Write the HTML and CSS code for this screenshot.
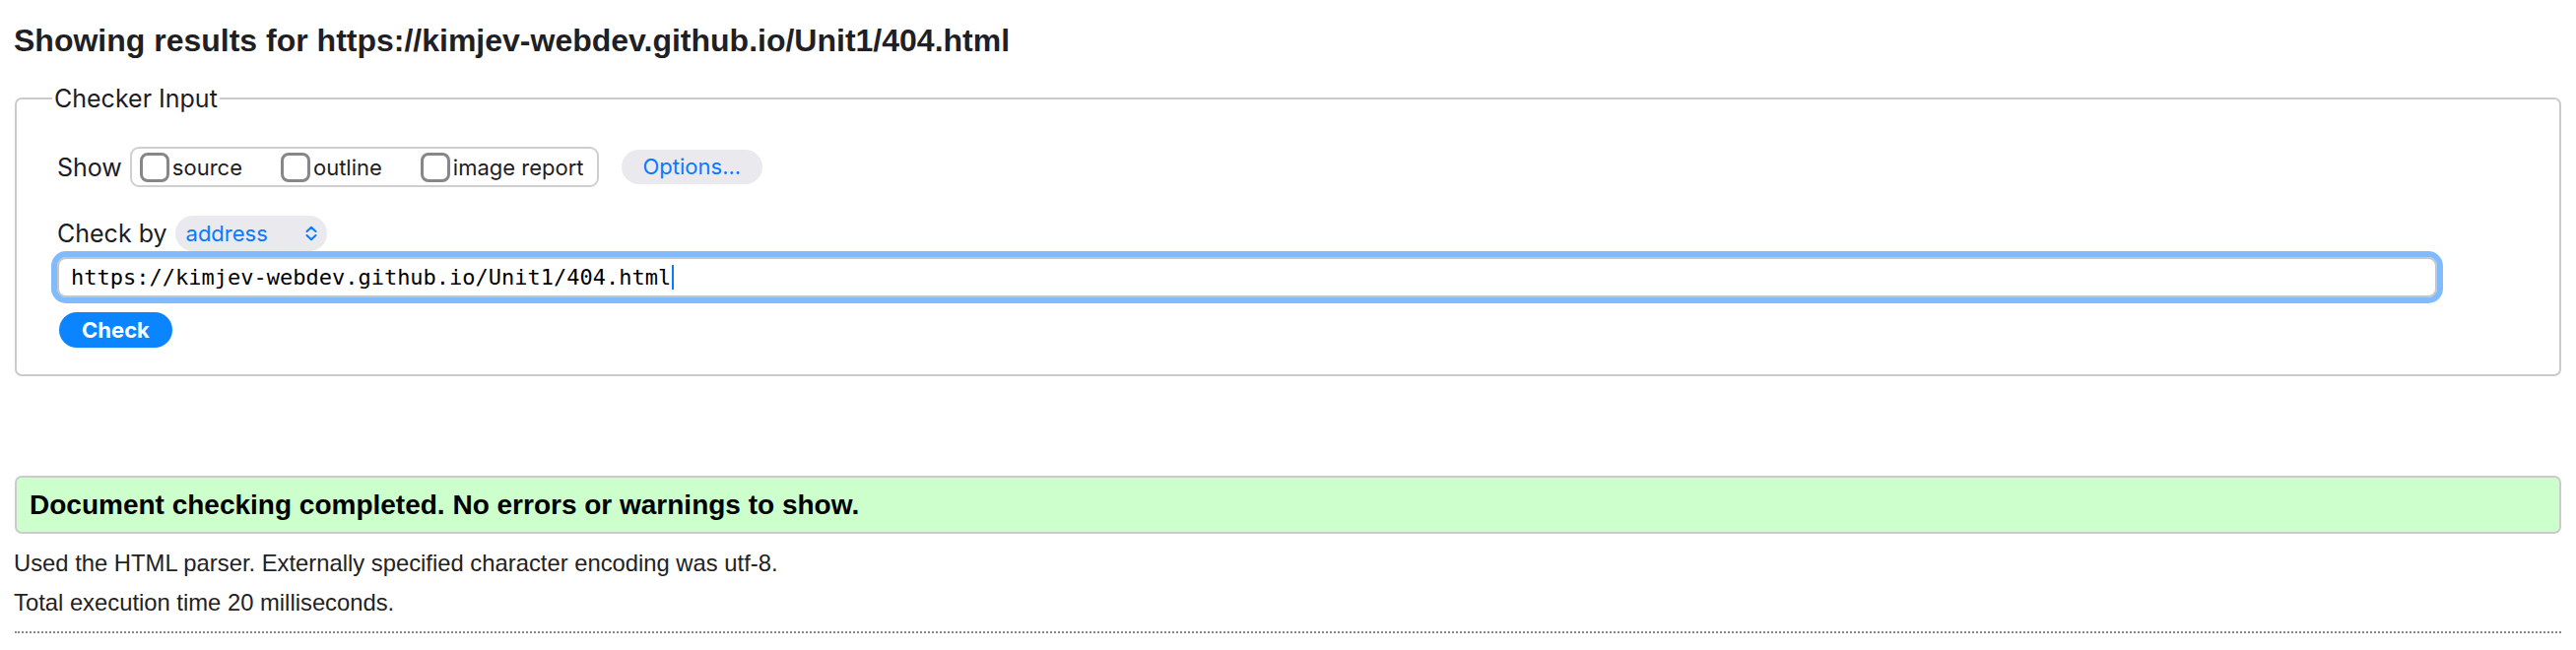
FILE: index.html
```html
<!DOCTYPE html>
<html lang="en">
<head>
<meta charset="utf-8">
<title>Showing results for https://kimjev-webdev.github.io/Unit1/404.html</title>
<link rel="stylesheet" href="styles.css">
</head>
<body>
<h2 class="page-title">Showing results for https://kimjev-webdev.github.io/Unit1/404.html</h2>
<fieldset class="checker">
  <legend class="checker-legend">Checker Input</legend>
  <div class="row show-row">
    <span class="row-label">Show</span>
    <div class="check-group">
      <label class="check-item"><span class="checkbox"></span><span class="check-text">source</span></label>
      <label class="check-item"><span class="checkbox"></span><span class="check-text">outline</span></label>
      <label class="check-item last"><span class="checkbox"></span><span class="check-text">image report</span></label>
    </div>
    <span class="pill-button">Options...</span>
  </div>
  <div class="row checkby-row">
    <span class="row-label">Check by</span>
    <span class="select">
      <span class="select-text">address</span>
      <svg class="chevrons" width="14" height="16" viewBox="0 0 14 16"><path d="M2.5 6 L7 1.8 L11.5 6" fill="none" stroke="#0a7aff" stroke-width="2" stroke-linecap="round" stroke-linejoin="round"/><path d="M2.5 10 L7 14.2 L11.5 10" fill="none" stroke="#0a7aff" stroke-width="2" stroke-linecap="round" stroke-linejoin="round"/></svg>
    </span>
  </div>
  <div class="url-input"><span class="url-text">https://kimjev-webdev.github.io/Unit1/404.html</span><span class="caret"></span></div>
  <span class="submit">Check</span>
</fieldset>
<div class="success">Document checking completed. No errors or warnings to show.</div>
<p class="details">Used the HTML parser. Externally specified character encoding was utf-8.</p>
<p class="details">Total execution time 20 milliseconds.</p>
<hr class="dotted">
</body>
</html>
```
FILE: styles.css
```css
html, body {
  margin: 0;
  background: #ffffff;
}
body {
  padding: 0 15px 0 14px;
  font-family: "Liberation Sans", Arial, sans-serif;
  color: #222;
}
.page-title {
  margin: 0;
  padding-top: 22px;
  font-size: 32px;
  line-height: 38px;
  font-weight: bold;
  color: #1f1f24;
}
.checker {
  margin: 25px 0 0 1px;
  border: 2px solid #cbcbcb;
  border-radius: 7px;
  padding: 34px 0 27px 41px;
  font-family: Inter, "Noto Sans", sans-serif;
  color: #1d1d1f;
}
.checker-legend {
  margin-left: -5px;
  padding: 0 2px;
  font-size: 25px;
  line-height: 30px;
  color: #1d1d1f;
}
.row {
  display: flex;
  align-items: center;
}
.row-label {
  font-size: 25px;
  line-height: 30px;
}
.show-row .row-label {
  margin-right: 8px;
}
.check-group {
  display: flex;
  align-items: center;
  height: 37px;
  border: 2px solid #cfcfcf;
  border-radius: 9px;
  padding: 0 13px 0 8px;
}
.check-item {
  display: flex;
  align-items: center;
  margin-right: 39px;
}
.check-item.last {
  margin-right: 0;
}
.checkbox {
  width: 24px;
  height: 24px;
  border: 3px solid #86868b;
  border-radius: 8px;
  margin-right: 3px;
}
.check-text {
  font-size: 22px;
  line-height: 30px;
}
.pill-button {
  margin-left: 23px;
  height: 35px;
  line-height: 35px;
  padding: 0 22px;
  border-radius: 18px;
  background: #e9e9ee;
  color: #0a7aff;
  font-size: 22px;
}
.checkby-row {
  margin-top: 29px;
}
.checkby-row .row-label {
  margin-right: 8px;
}
.select {
  display: flex;
  align-items: center;
  justify-content: space-between;
  width: 154px;
  height: 36px;
  box-sizing: border-box;
  padding: 0 9px 0 11px;
  border-radius: 18px;
  background: #e9e9ee;
}
.select-text {
  color: #0a7aff;
  font-size: 22px;
}
.chevrons {
  display: block;
}
.url-input {
  display: flex;
  align-items: center;
  margin: 6px 0 0 0;
  width: 2416px;
  height: 41px;
  box-sizing: border-box;
  border: 2px solid #c6c6c6;
  border-radius: 9px;
  outline: 6px solid #80bbfd;
  padding-left: 12px;
  font-family: "DejaVu Sans Mono", "Liberation Mono", monospace;
  font-size: 22px;
  color: #000;
}
.caret {
  display: inline-block;
  width: 2px;
  height: 25px;
  background: #0a7aff;
  margin-left: 1px;
}
.submit {
  display: inline-block;
  margin: 15px 0 0 2px;
  width: 115px;
  height: 36px;
  line-height: 36px;
  text-align: center;
  border-radius: 18px;
  background: #0b84ff;
  color: #fff;
  font-weight: 700;
  font-size: 22px;
  vertical-align: top;
}
.success {
  margin: 101px 0 0 1px;
  border: 2px solid #cbcbcb;
  border-radius: 7px;
  background: #ccffcc;
  padding: 0 13px;
  line-height: 55px;
  font-size: 28px;
  font-weight: bold;
  color: #000;
}
.details {
  margin: 0;
  font-size: 23.8px;
  line-height: 40px;
  color: #222;
}
.details:first-of-type {
  margin-top: 10px;
}
.dotted {
  margin: 9px 0 0 1px;
  border: 0;
  border-top: 2px dotted #888;
  height: 0;
}
```
